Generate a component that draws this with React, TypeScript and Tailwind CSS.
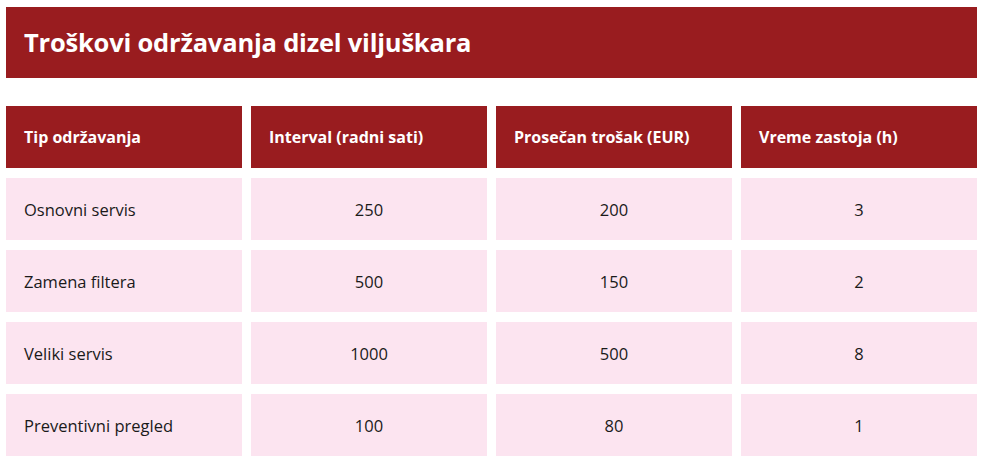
const headers = ['Tip održavanja', 'Interval (radni sati)', 'Prosečan trošak (EUR)', 'Vreme zastoja (h)'];

const rows = [
  ['Osnovni servis', '250', '200', '3'],
  ['Zamena filtera', '500', '150', '2'],
  ['Veliki servis', '1000', '500', '8'],
  ['Preventivni pregled', '100', '80', '1'],
];

export default function App() {
  return (
    <div className="min-h-screen bg-white pl-[6px] pr-[8px] pt-[7px] font-['Open_Sans',sans-serif] text-[#1a1a1a]">
      <div className="flex h-[71px] items-center bg-[#991c1f] px-[18px]">
        <h1 className="text-[25.5px] font-bold tracking-[-0.2px] text-white">Troškovi održavanja dizel viljuškara</h1>
      </div>
      <div className="mt-[28px] grid grid-cols-4 gap-x-[9px] gap-y-[10px]">
        {headers.map((h) => (
          <div key={h} className="flex h-[62px] items-center bg-[#991c1f] px-[18px] text-[16px] font-bold text-white">
            {h}
          </div>
        ))}
        {rows.map((r) =>
          r.map((c, i) => (
            <div
              key={r[0] + i}
              className={`flex h-[62px] items-center bg-[#fce4f0] px-[18px] pt-[2px] text-[16.5px] ${i === 0 ? 'justify-start' : 'justify-center'}`}
            >
              {c}
            </div>
          ))
        )}
      </div>
    </div>
  );
}
